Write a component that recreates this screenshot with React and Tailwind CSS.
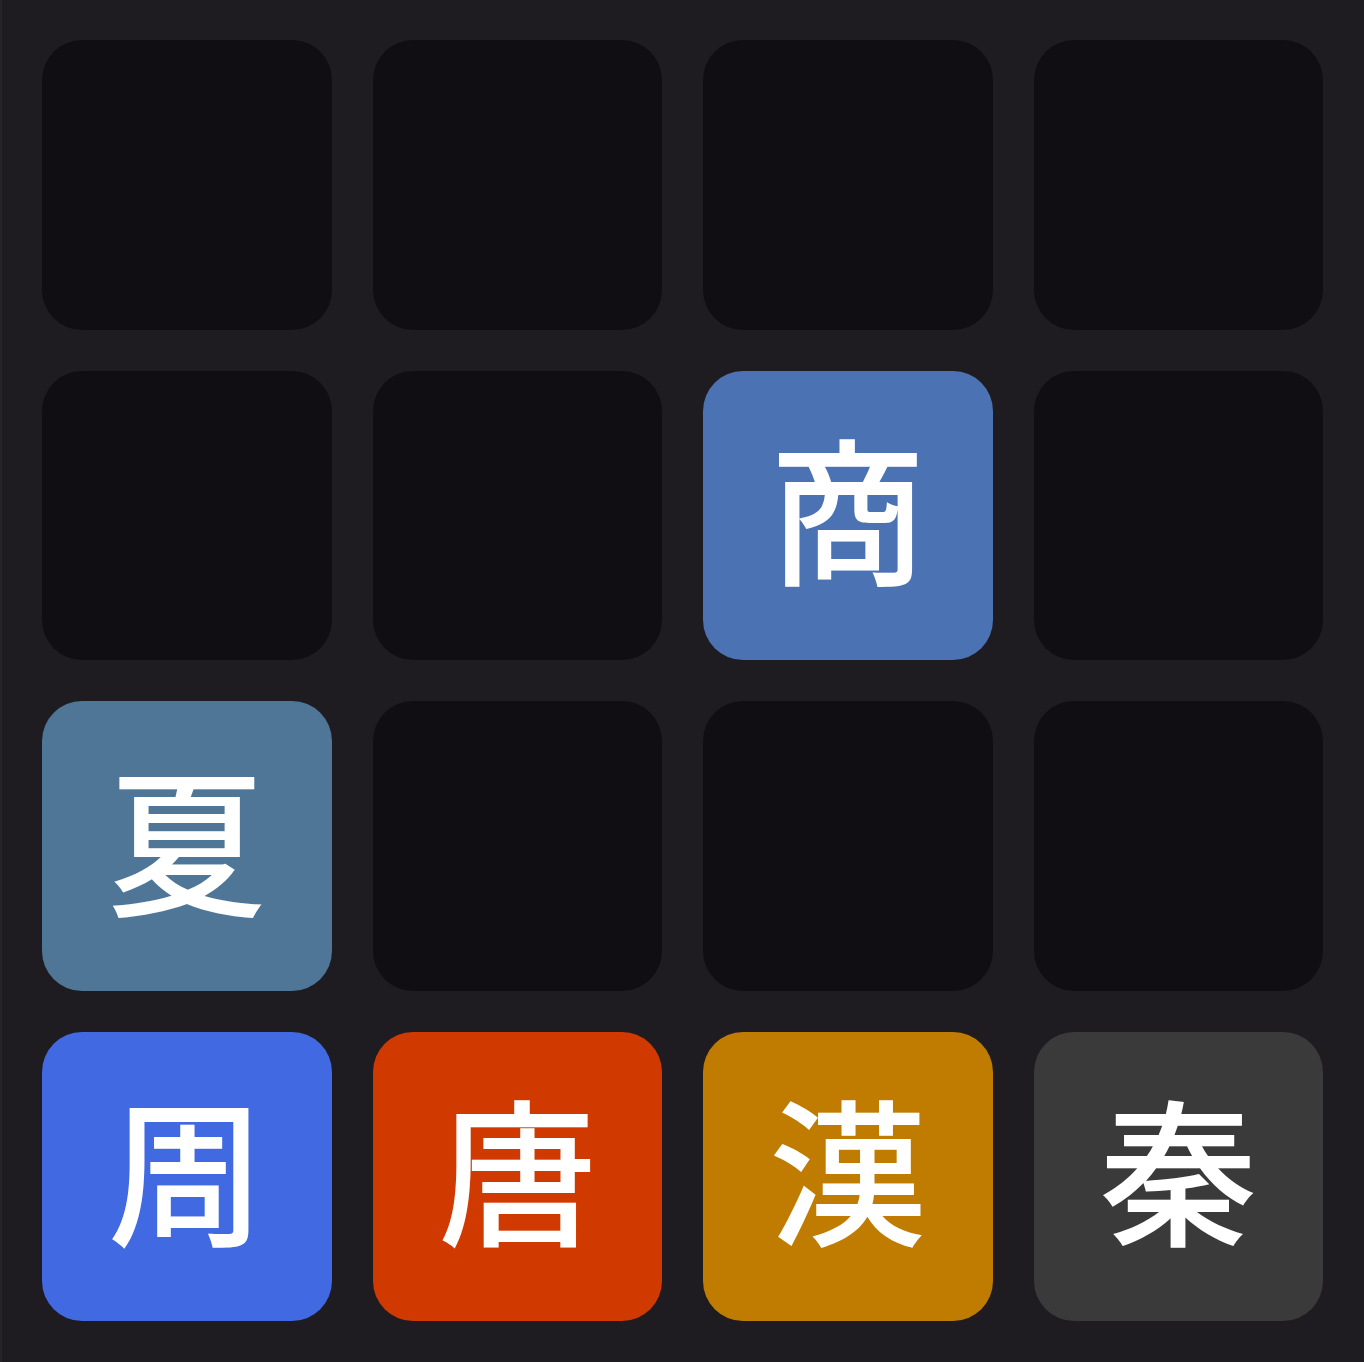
import React from 'react'

const cells = [
  null, null, null, null,
  null, null, { ch: '商', bg: 'bg-[#4b72b2]' }, null,
  { ch: '夏', bg: 'bg-[#4f7696]' }, null, null, null,
  { ch: '周', bg: 'bg-[#4169e1]' },
  { ch: '唐', bg: 'bg-[#d03a00]' },
  { ch: '漢', bg: 'bg-[#c07c00]' },
  { ch: '秦', bg: 'bg-[#3a3a3a]' },
]

const App = () => {
  return (
    <div className="w-[1364px] h-[1362px] bg-[#1f1c21] border-l-2 border-[#262329] pl-[40px] pt-[40px]">
      <div className="grid grid-cols-[repeat(4,289.5px)] grid-rows-[repeat(4,289.5px)] gap-[41px]">
        {cells.map((c, i) => (
          <div
            key={i}
            className={`rounded-[40px] flex items-center justify-center ${c ? c.bg : 'bg-[#110e13]'}`}
          >
            {c && (
              <span
                className="text-white text-[158px] leading-none font-medium mb-[20px]"
                style={{ fontFamily: '"Noto Sans CJK JP", "Noto Sans CJK SC", sans-serif' }}
              >
                {c.ch}
              </span>
            )}
          </div>
        ))}
      </div>
    </div>
  )
}

export default App
